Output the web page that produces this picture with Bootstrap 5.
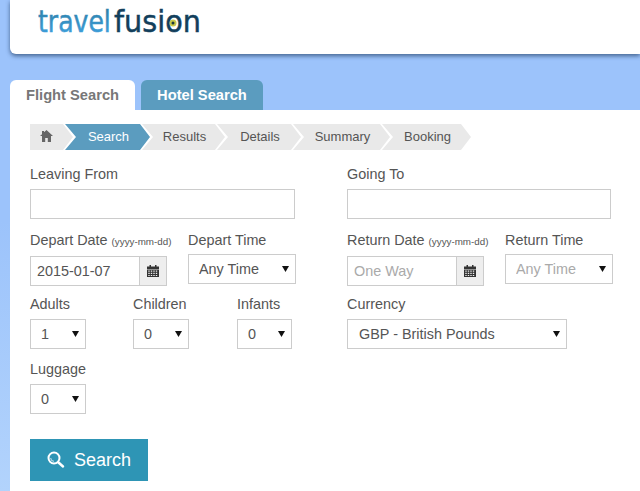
<!DOCTYPE html>
<html lang="en"><head><meta charset="utf-8"><title>Travelfusion</title>
<link rel="stylesheet" href="https://cdn.jsdelivr.net/npm/bootstrap@5.3.0/dist/css/bootstrap.min.css">
<style>
html,body{height:491px;overflow:hidden}
body{background:linear-gradient(#9cc3fb 0,#9cc3fb 45%,#b2d3fc 100%);font-family:"Liberation Sans",Arial,sans-serif;color:#555;font-size:14px}
.tf-head{margin-left:10px;height:54px;background:#fff;border-bottom-left-radius:6px;box-shadow:0 2px 4px rgba(40,70,110,.75)}
.tf-logo{display:block;margin-left:28px}
.tf-logo text{font-family:"DejaVu Sans",sans-serif;font-weight:400;stroke-width:.5px}
.tf-tabs{margin:26px 0 0 10px;gap:6px}
.tf-tabs .nav-link{height:30px;padding:0 16px;line-height:30px;font-weight:700;font-size:14.7px;border-radius:6px 6px 0 0;background:#5b9cbf;color:#fff}
.tf-tabs .nav-link.active{background:#fff;color:#777}
.tf-panel{margin-left:10px;background:#fff;height:381px;padding:14px 0 0 20px}
.tf-crumbs{height:26px;margin:0;padding:0;list-style:none;font-size:13px}
.tf-crumbs li{height:26px;line-height:26px;background:#e9e9e9;color:#555;text-align:center;margin-right:-8px;padding-left:2px;clip-path:polygon(0 0,calc(100% - 10px) 0,100% 50%,calc(100% - 10px) 100%,0 100%,11px 50%)}
.tf-crumbs li:first-child{clip-path:polygon(0 0,calc(100% - 10px) 0,100% 50%,calc(100% - 10px) 100%,0 100%);width:43px;text-align:left;padding-left:10px}
.tf-crumbs li.on{background:#5b9cbf;color:#fff}
.tf-w1{width:85px}.tf-w2{width:83px}.tf-w3{width:84px}.tf-w4{width:97px}.tf-w5{width:89px}
.tf-lab{display:block;margin:0;line-height:16px;color:#555;font-size:14.4px;white-space:nowrap}
.tf-lab small{font-size:9.8px}
.form-control,.form-select{border-radius:0;border:1px solid #ccc;height:30px;min-height:30px;padding:0 8px;font-size:14.4px;color:#555;box-shadow:none}
.form-select{padding:1px 20px 0 10px;background-size:7px 6px;background-position:right 6px center;background-image:url("data:image/svg+xml,%3Csvg xmlns='http://www.w3.org/2000/svg' viewBox='0 0 7 6'%3E%3Cpath d='M0 0h7L3.500 6z' fill='%23111'/%3E%3C/svg%3E")}
.form-control::placeholder{color:#aaa}
.tf-muted{color:#aaa}
.tf-date{padding-left:6px}
.input-group-text{border-radius:0;border:1px solid #ccc;background:#eee;padding:0;width:28px;justify-content:center;height:30px;margin-left:-1px}
.tf-cols{display:flex}
.tf-left{width:317px;flex:none}
.tf-right{flex:none;width:270px}
.tf-r1{margin-top:16px}.tf-r2{margin-top:13px}.tf-r3{margin-top:10px}.tf-r4{margin-top:12px}
.tf-sel{margin-top:7px}.tf-sel2{margin-top:6px}
.tf-dg{width:137px;margin-top:6px}
.tf-c158{width:158px}.tf-c103{width:103px}.tf-c104{width:104px}
.tf-i265{width:265px}.tf-i264{width:264px}.tf-s108{width:108px}.tf-s56{width:56px}.tf-s55{width:55px}.form-select.tf-s220{width:220px;padding-left:11px}
.tf-go{margin-top:25px;width:118px;height:42px;background:#2e95b5;color:#fff;border:0;border-radius:0;font-size:18px;padding:0;gap:9px}
.tf-go:hover{background:#2e95b5;color:#fff}
</style></head><body>
<div class="tf-head">
<svg class="tf-logo" width="170" height="40" viewBox="0 0 170 40" role="img" aria-label="travelfusion">
<defs><linearGradient id="g1" x1="0" x2="0" y1="0" y2="1"><stop offset="0" stop-color="#2a7a9f"/><stop offset="1" stop-color="#42a6e6"/></linearGradient></defs>
<g transform="scale(.81 1)"><text x="0" y="32" font-size="31" fill="url(#g1)" stroke="url(#g1)">travel</text></g>
<g transform="translate(76 0) scale(.925 1)"><text x="0" y="32" font-size="31" fill="#123f5c" stroke="#123f5c">fusion</text></g>
<circle cx="135" cy="23" r="3.500" fill="#c9c84a"/><circle cx="135" cy="23" r="1.500" fill="#1d3b3c"/>
</svg>
</div>
<ul class="nav tf-tabs">
<li class="nav-item"><a class="nav-link active" href="#">Flight Search</a></li>
<li class="nav-item"><a class="nav-link" href="#">Hotel Search</a></li>
</ul>
<div class="tf-panel">
<ol class="tf-crumbs d-flex">
<li><svg width="13" height="12" viewBox="0 0 13 12" class="mb-1"><path d="M6.500 0 13 6H11V12H7.800V8H5.200V12H2V6H0L2 4.200V1H4V2.300Z" fill="#666"/></svg></li>
<li class="on tf-w1">Search</li>
<li class="tf-w2">Results</li>
<li class="tf-w3">Details</li>
<li class="tf-w4">Summary</li>
<li class="tf-w5">Booking</li>
</ol>
<div class="tf-cols tf-r1">
<div class="tf-left"><label class="tf-lab">Leaving From</label><input class="form-control tf-i265 tf-sel"></div>
<div class="tf-right"><label class="tf-lab">Going To</label><input class="form-control tf-i264 tf-sel"></div>
</div>
<div class="tf-cols tf-r2">
<div class="tf-left d-flex">
<div class="tf-c158"><label class="tf-lab">Depart Date <small>(yyyy-mm-dd)</small></label>
<div class="input-group flex-nowrap tf-dg"><input class="form-control tf-date" value="2015-01-07"><span class="input-group-text"><svg width="12" height="12" viewBox="0 0 12 12"><use href="#cal"/></svg></span></div></div>
<div><label class="tf-lab">Depart Time</label><select class="form-select tf-s108 tf-sel2"><option>Any Time</option></select></div>
</div>
<div class="tf-right d-flex">
<div class="tf-c158"><label class="tf-lab">Return Date <small>(yyyy-mm-dd)</small></label>
<div class="input-group flex-nowrap tf-dg"><input class="form-control tf-date" placeholder="One Way"><span class="input-group-text"><svg width="12" height="12" viewBox="0 0 12 12"><use href="#cal"/></svg></span></div></div>
<div><label class="tf-lab">Return Time</label><select class="form-select tf-muted tf-s108 tf-sel2"><option>Any Time</option></select></div>
</div>
</div>
<div class="tf-cols tf-r3">
<div class="tf-left d-flex">
<div class="tf-c103"><label class="tf-lab">Adults</label><select class="form-select tf-s56 tf-sel"><option>1</option></select></div>
<div class="tf-c104"><label class="tf-lab">Children</label><select class="form-select tf-s56 tf-sel"><option>0</option></select></div>
<div><label class="tf-lab">Infants</label><select class="form-select tf-s55 tf-sel"><option>0</option></select></div>
</div>
<div class="tf-right"><label class="tf-lab">Currency</label><select class="form-select tf-s220 tf-sel"><option>GBP - British Pounds</option></select></div>
</div>
<div class="tf-r4"><label class="tf-lab">Luggage</label><select class="form-select tf-s56 tf-sel"><option>0</option></select></div>
<button class="btn tf-go d-flex align-items-center justify-content-center" type="button">
<svg width="18" height="18" viewBox="0 0 18 18"><circle cx="7" cy="7" r="5.500" fill="none" stroke="#fff" stroke-width="2"/><path d="M3.700 7A3.300 3.300 0 0 0 7 10.300" fill="none" stroke="#cfe6ee" stroke-width="1"/><path d="M11.500 11.500 16 15.500" stroke="#fff" stroke-width="2.500" stroke-linecap="round"/></svg>
<span>Search</span></button>
</div>
<svg width="0" height="0" class="d-block"><defs><g id="cal"><path fill="#333" d="M2.500 0h1.500v1.500H8V0h1.500v1.500H12V4H0V1.500H2.500Z"/><path fill="#333" d="M0 4.500H12V12H0Z"/><path fill="#eee" d="M1.300 5.500h1.400v1.200H1.300ZM3.800 5.500h1.400v1.200H3.800ZM6.300 5.500h1.400v1.200H6.300ZM8.800 5.500h1.400v1.200H8.800ZM1.300 7.700h1.400v1.200H1.300ZM3.800 7.700h1.400v1.200H3.800ZM6.300 7.700h1.400v1.200H6.300ZM8.800 7.700h1.400v1.200H8.800ZM1.300 9.900h1.400v1.200H1.300ZM3.800 9.900h1.400v1.200H3.800ZM6.300 9.900h1.400v1.200H6.300ZM8.800 9.900h1.400v1.200H8.800Z"/></g></defs></svg>
</body></html>
